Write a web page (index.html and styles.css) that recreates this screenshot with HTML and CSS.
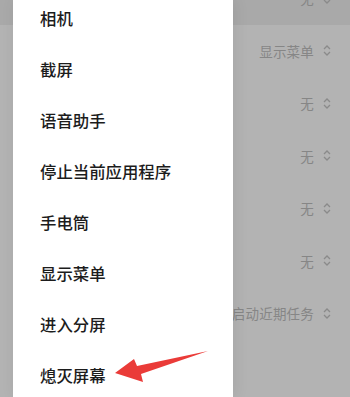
FILE: index.html
```html
<!DOCTYPE html>
<html lang="zh">
<head>
<meta charset="utf-8">
<link rel="stylesheet" href="styles.css">
</head>
<body>
<div class="screen">
  <div class="settings">
    <div class="row row-active"><span class="val">无</span><svg class="chev" viewBox="0 0 8 13"><path d="M1 5 L4 2 L7 5 M1 8 L4 11 L7 8"/></svg></div>
    <div class="row"><span class="val">显示菜单</span><svg class="chev" viewBox="0 0 8 13"><path d="M1 5 L4 2 L7 5 M1 8 L4 11 L7 8"/></svg></div>
    <div class="row"><span class="val">无</span><svg class="chev" viewBox="0 0 8 13"><path d="M1 5 L4 2 L7 5 M1 8 L4 11 L7 8"/></svg></div>
    <div class="row"><span class="val">无</span><svg class="chev" viewBox="0 0 8 13"><path d="M1 5 L4 2 L7 5 M1 8 L4 11 L7 8"/></svg></div>
    <div class="row"><span class="val">无</span><svg class="chev" viewBox="0 0 8 13"><path d="M1 5 L4 2 L7 5 M1 8 L4 11 L7 8"/></svg></div>
    <div class="row"><span class="val">无</span><svg class="chev" viewBox="0 0 8 13"><path d="M1 5 L4 2 L7 5 M1 8 L4 11 L7 8"/></svg></div>
    <div class="row"><span class="val">启动近期任务</span><svg class="chev" viewBox="0 0 8 13"><path d="M1 5 L4 2 L7 5 M1 8 L4 11 L7 8"/></svg></div>
    <div class="row"></div>
  </div>
  <div class="menu">
    <div class="menu-list">
      <div class="item">相机</div>
      <div class="item">截屏</div>
      <div class="item">语音助手</div>
      <div class="item">停止当前应用程序</div>
      <div class="item">手电筒</div>
      <div class="item">显示菜单</div>
      <div class="item">进入分屏</div>
      <div class="item">熄灭屏幕</div>
    </div>
  </div>
  <svg class="arrow" viewBox="0 0 350 397" width="350" height="397">
    <polygon points="115,373 134,359 137,366 208,351 141,374 143,382" fill="#ea3b38"/>
  </svg>
</div>
</body>
</html>
```

FILE: styles.css
```css
* { box-sizing: border-box; }
html, body {
  margin: 0;
  padding: 0;
  width: 350px;
  height: 397px;
  overflow: hidden;
}
body {
  font-family: "Noto Sans CJK SC", "Noto Sans", sans-serif;
  background: #b3b3b3;
}
.screen {
  position: relative;
  width: 350px;
  height: 397px;
  overflow: hidden;
  background: #b3b3b3;
}
.settings {
  margin-top: -28px;
  display: flex;
  flex-direction: column;
}
.row {
  height: 52.5px;
  display: flex;
  align-items: center;
  justify-content: flex-end;
  padding-right: 19px;
  gap: 9px;
}
.row-active {
  background: #a9a9a9;
}
.val {
  font-size: 13.5px;
  color: #868686;
  letter-spacing: 0.2px;
}
.chev {
  width: 8px;
  height: 13px;
  fill: none;
  stroke: #8a8a8a;
  stroke-width: 1.3;
}
.menu {
  position: absolute;
  left: 13px;
  top: 0;
  width: 220px;
  height: 397px;
  background: #ffffff;
  box-shadow: 2px 0 14px rgba(0, 0, 0, 0.08);
  overflow: hidden;
}
.menu-list {
  margin-top: -8px;
  display: flex;
  flex-direction: column;
}
.item {
  height: 51px;
  display: flex;
  align-items: center;
  padding-left: 27px;
  font-size: 16.4px;
  font-weight: 500;
  color: #1c1c1c;
}
.arrow {
  position: absolute;
  left: 0;
  top: 0;
}
```
